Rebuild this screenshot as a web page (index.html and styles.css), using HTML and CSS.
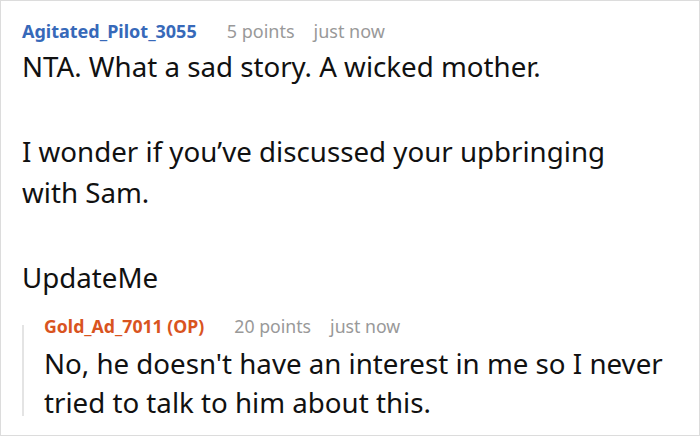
FILE: index.html
```html
<!DOCTYPE html>
<html>
<head>
<meta charset="utf-8">
<link rel="stylesheet" href="styles.css">
</head>
<body>
<div class="frame">
  <div class="comment">
    <div class="meta">
      <span class="author">Agitated_Pilot_3055</span>
      <span class="info">5 points</span>
      <span class="info">just now</span>
    </div>
    <div class="body">
      <p>NTA. What a sad story. A wicked mother.</p>
      <p>I wonder if you’ve discussed your upbringing with Sam.</p>
      <p>UpdateMe</p>
    </div>
    <div class="reply">
      <div class="meta">
        <span class="author op">Gold_Ad_7011 (OP)</span>
        <span class="info">20 points</span>
        <span class="info">just now</span>
      </div>
      <div class="body">
        <p>No, he doesn't have an interest in me so I never tried to talk to him about this.</p>
      </div>
    </div>
  </div>
</div>
</body>
</html>
```

FILE: styles.css
```css
html, body {
  margin: 0;
  padding: 0;
  background: #fff;
}
.frame {
  box-sizing: border-box;
  width: 700px;
  height: 436px;
  border: 1px solid #dcdcdc;
  overflow: hidden;
  font-family: "Noto Sans", "Open Sans", sans-serif;
  color: #111;
}
.comment {
  padding: 18px 20px 0 21px;
}
.meta {
  display: flex;
  gap: 19px;
  align-items: baseline;
  font-size: 18px;
  line-height: 24px;
}
.author {
  font-weight: 700;
  color: #3769b9;
  margin-right: 11px;
}
.author.op {
  color: #d9541f;
}
.info {
  color: #999;
}
.body {
  margin-top: 3px;
  font-size: 27.7px;
  line-height: 41px;
}
.body p {
  margin: 0 0 44px 0;
  max-width: 640px;
}
.comment > .body p:last-child {
  margin-bottom: 0;
}
.reply {
  position: relative;
  margin-top: 16px;
  padding-left: 22px;
}
.reply .meta {
  font-size: 17.7px;
}
.reply::before {
  content: "";
  position: absolute;
  left: 0;
  top: 11px;
  bottom: 6px;
  width: 2px;
  background: #e4e4e4;
}
.reply .body {
  margin-top: 6px;
  line-height: 39px;
}
.reply .body p {
  margin: 0;
  max-width: 650px;
}
```
